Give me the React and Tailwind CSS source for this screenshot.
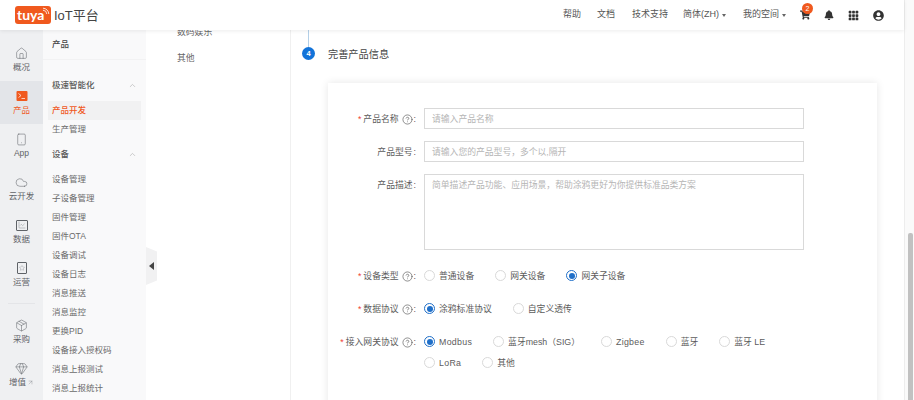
import React from 'react'
import { Home, Smartphone, Cloud, ChartLine, Package, Gem, ChevronUp, CircleHelp, ArrowUpRight, Star } from 'lucide-react'
import { FaShoppingCart, FaBell, FaUserCircle } from 'react-icons/fa'
import { BsGrid3X3GapFill } from 'react-icons/bs'

const FONT = "font-['Liberation_Sans','Noto_Sans_CJK_SC',sans-serif]"

const RailItem = ({ icon, label, active, extra }) => (
  <div className={`h-[43px] flex flex-col items-center justify-center ${active ? 'bg-[#e3e5e9] text-[#f0591e]' : 'text-[#5f6368]'}`}>
    <div className="h-[15px] flex items-center justify-center">{icon}</div>
    <div className="text-[8.5px] leading-[13px] flex items-center">
      {label}
      {extra}
    </div>
  </div>
)

const SideLink = ({ children, active }) => (
  <div className={`h-[19px] pl-[4px] flex items-center ${active ? 'bg-[#f1f1f2] text-[#f0591e] font-medium' : 'text-[#6b6b6b]'}`}>
    {children}
  </div>
)

const SideTitle = ({ children, className }) => (
  <div className={`h-[20px] pl-[9px] pr-[9px] flex items-center justify-between text-[#595959] font-medium ${className}`}>
    {children}
    <ChevronUp size={9} strokeWidth={1.5} className="text-[#a8a8a8]" />
  </div>
)

const Label = ({ children, required, help }) => (
  <div className="w-[88px] shrink-0 h-[21px] pt-[2px] flex items-center justify-end text-[8.8px] text-[#5c5c5c] whitespace-nowrap">
    {required && <span className="text-[#f04134] mr-[2px]">*</span>}
    {children}
    {help && <CircleHelp size={11} strokeWidth={1.4} className="ml-[3px] text-[#555]" />}
    <span className="ml-[1px]">:</span>
  </div>
)

const Radio = ({ children, checked }) => (
  <div className="h-[21px] flex items-center text-[8.8px] text-[#5c5c5c] whitespace-nowrap">
    <span className={`w-[11px] h-[11px] rounded-full border flex items-center justify-center mr-[4px] ${checked ? 'border-[#1f6fc9]' : 'border-[#d9d9d9]'}`}>
      {checked && <span className="w-[6px] h-[6px] rounded-full bg-[#1f6fc9]" />}
    </span>
    <span className="pt-[2px]">{children}</span>
  </div>
)

const Field = ({ placeholder }) => (
  <div className="w-[380px] h-[21px] border border-[#d9d9d9] pt-[2px] flex items-center px-[7px] text-[8.8px] text-[#b5b5b5]">
    {placeholder}
  </div>
)

const Logo = () => (
  <div className="relative w-[36px] h-[18px] rounded-[3px] bg-[#f0591e] flex items-center pl-[2px] text-white text-[14px] font-bold leading-none font-['Lato',sans-serif]">
    tuya
    <svg className="absolute right-[1px] top-[1px]" width="8" height="8" viewBox="0 0 8 8" fill="none" stroke="#fff" strokeWidth="0.8">
      <path d="M1 1.2 A6 6 0 0 1 6.8 7" />
      <path d="M1 3.2 A4 4 0 0 1 4.8 7" />
    </svg>
  </div>
)

export default function App() {
  return (
    <div className={`w-[914px] h-[400px] overflow-hidden flex bg-white ${FONT}`}>
      <div className="w-[905px] h-full flex flex-col border-r border-[#ededed]">
        {/* top bar */}
        <header className="relative z-10 h-[30px] shrink-0 bg-white shadow-[0_1px_4px_rgba(0,0,0,0.08)] flex items-center pl-[15px] text-[#4a4a4a]">
          <Logo />
          <div className="ml-[3px] text-[13px] leading-none text-[#444]">IoT平台</div>
          <nav className="ml-auto flex items-center text-[9px] text-[#555] whitespace-nowrap">
            <span className="mr-[16px]">帮助</span>
            <span className="mr-[17px]">文档</span>
            <span className="mr-[15px]">技术支持</span>
            <span>简体(ZH)</span>
            <span className="ml-[3px] mr-[17px] w-0 h-0 border-x-[2.5px] border-x-transparent border-t-[3px] border-t-[#666]" />
            <span>我的空间</span>
            <span className="ml-[3px] mr-[14px] w-0 h-0 border-x-[2.5px] border-x-transparent border-t-[3px] border-t-[#666]" />
            <span className="relative mr-[14px]">
              <FaShoppingCart size={10} className="text-[#333]" />
              <span className="absolute -top-[7px] left-[2px] w-[11px] h-[11px] rounded-full bg-[#f0591e] text-white text-[7px] leading-[11px] text-center">2</span>
            </span>
            <FaBell size={10} className="text-[#333] mr-[14px]" />
            <BsGrid3X3GapFill size={11} className="text-[#333] mr-[14px]" />
            <FaUserCircle size={11} className="text-[#333] mr-[20px]" />
          </nav>
        </header>

        <div className="flex-1 min-h-0 flex relative">
          {/* icon rail */}
          <aside className="w-[43px] shrink-0 bg-[#eff0f2] pt-[8px]">
            <RailItem label="概况" icon={<Home size={13} strokeWidth={1} />} />
            <RailItem
              active
              label="产品"
              icon={
                <svg width="12" height="12" viewBox="0 0 12 12">
                  <rect x="0.5" y="1" width="11" height="10" rx="1" fill="#f0591e" />
                  <path d="M2.5 3.5 L5 5.5 L2.5 7.5 M5.5 8.5 H9" stroke="#fff" strokeWidth="0.7" fill="none" />
                </svg>
              }
            />
            <RailItem label="App" icon={<Smartphone size={13} strokeWidth={1} />} />
            <RailItem label="云开发" icon={<Cloud size={13} strokeWidth={1} />} />
            <RailItem
              label="数据"
              icon={
                <span className="w-[12px] h-[11px] border border-[#5f6368] rounded-[1px] flex items-center justify-center">
                  <ChartLine size={8} strokeWidth={1} />
                </span>
              }
            />
            <RailItem
              label="运营"
              icon={
                <span className="w-[10px] h-[12px] border border-[#5f6368] rounded-[1px] flex items-center justify-center">
                  <Star size={6} strokeWidth={1} />
                </span>
              }
            />
            <div className="mx-[8px] mt-[7px] mb-[6px] border-t border-[#e4e5e8]" />
            <RailItem label="采购" icon={<Package size={13} strokeWidth={1} />} />
            <RailItem label="增值" icon={<Gem size={13} strokeWidth={1} />} extra={<ArrowUpRight size={7} strokeWidth={1} className="ml-[1px]" />} />
          </aside>

          {/* product menu */}
          <aside className="w-[103px] shrink-0 bg-[#f9f9fa] text-[8.5px] leading-none whitespace-nowrap overflow-hidden">
            <div className="h-[30px] pl-[9px] flex items-center border-b border-[#f2f2f3] text-[#444] font-medium">产品</div>
            <SideTitle className="mt-[15px]">极速智能化</SideTitle>
            <div className="mt-[6px] ml-[5px] mr-[5px]">
              <SideLink active>产品开发</SideLink>
              <SideLink>生产管理</SideLink>
            </div>
            <SideTitle className="mt-[5px]">设备</SideTitle>
            <div className="mt-[6px] ml-[5px] mr-[5px]">
              <SideLink>设备管理</SideLink>
              <SideLink>子设备管理</SideLink>
              <SideLink>固件管理</SideLink>
              <SideLink>固件OTA</SideLink>
              <SideLink>设备调试</SideLink>
              <SideLink>设备日志</SideLink>
              <SideLink>消息推送</SideLink>
              <SideLink>消息监控</SideLink>
              <SideLink>更换PID</SideLink>
              <SideLink>设备接入授权码</SideLink>
              <SideLink>消息上报测试</SideLink>
              <SideLink>消息上报统计</SideLink>
            </div>
          </aside>

          {/* category column */}
          <div className="relative w-[145px] shrink-0 border-r border-[#f0f0f0] pl-[31px] text-[8.8px] text-[#666]">
            <div className="absolute left-0 top-[217px] w-[11px] h-[38px] bg-[#f1f1f2] [clip-path:polygon(0_0,100%_12%,100%_88%,0_100%)] flex items-center justify-center">
              <span className="w-0 h-0 border-y-[4px] border-y-transparent border-r-[5px] border-r-[#444]" />
            </div>
            <div className="-mt-[10px]">
              <div className="h-[26px] flex items-center">数码娱乐</div>
              <div className="h-[26px] flex items-center">其他</div>
            </div>
          </div>

          {/* main */}
          <main className="flex-1 min-w-0 overflow-hidden pl-[11px]">
            <div className="flex h-[53px] items-start">
              <div className="w-[13px] flex flex-col items-center">
                <div className="w-[1px] h-[17px] bg-[#b4d0e8]" />
                <div className="w-[13px] h-[13px] rounded-full bg-[#1273d9] text-white text-[7.5px] font-bold leading-[13px] text-center">4</div>
              </div>
              <div className="ml-[13px] mt-[18px] text-[10.2px] leading-[14px] text-[#444]">完善产品信息</div>
            </div>

            <section className="ml-[26px] w-[549px] h-[340px] shadow-[0_0_8px_rgba(0,0,0,0.1)] pt-[25px]">
              <div className="flex gap-[8px]">
                <Label required help>产品名称</Label>
                <Field placeholder="请输入产品名称" />
              </div>
              <div className="flex gap-[8px] mt-[12px]">
                <Label>产品型号</Label>
                <Field placeholder="请输入您的产品型号，多个以,隔开" />
              </div>
              <div className="flex gap-[8px] mt-[12px]">
                <Label>产品描述</Label>
                <div className="w-[380px] h-[76px] border border-[#d9d9d9] px-[7px] py-[4px] text-[8.8px] leading-[12px] text-[#b5b5b5]">
                  简单描述产品功能、应用场景，帮助涂鸦更好为你提供标准品类方案
                </div>
              </div>
              <div className="flex gap-[8px] mt-[15px]">
                <Label required help>设备类型</Label>
                <div className="flex gap-x-[21px]">
                  <Radio>普通设备</Radio>
                  <Radio>网关设备</Radio>
                  <Radio checked>网关子设备</Radio>
                </div>
              </div>
              <div className="flex gap-[8px] mt-[12px]">
                <Label required help>数据协议</Label>
                <div className="flex gap-x-[21px]">
                  <Radio checked>涂鸦标准协议</Radio>
                  <Radio>自定义透传</Radio>
                </div>
              </div>
              <div className="flex gap-[8px] mt-[12px]">
                <Label required help>接入网关协议</Label>
                <div className="w-[380px] flex flex-wrap gap-x-[21px]">
                  <Radio checked><span className="tracking-[0.3px]">Modbus</span></Radio>
                  <Radio>蓝牙mesh（SIG）</Radio>
                  <Radio><span className="tracking-[0.3px]">Zigbee</span></Radio>
                  <Radio>蓝牙</Radio>
                  <Radio>蓝牙 LE</Radio>
                  <Radio><span className="tracking-[0.3px]">LoRa</span></Radio>
                  <Radio>其他</Radio>
                </div>
              </div>
            </section>
          </main>
        </div>
      </div>

      {/* page scrollbar */}
      <div className="w-[9px] h-full bg-[#fafafa] pt-[233px] pl-[3px] pr-[1px]">
        <div className="h-full rounded-t-[2px] bg-[#c1c1c1]" />
      </div>
    </div>
  )
}
